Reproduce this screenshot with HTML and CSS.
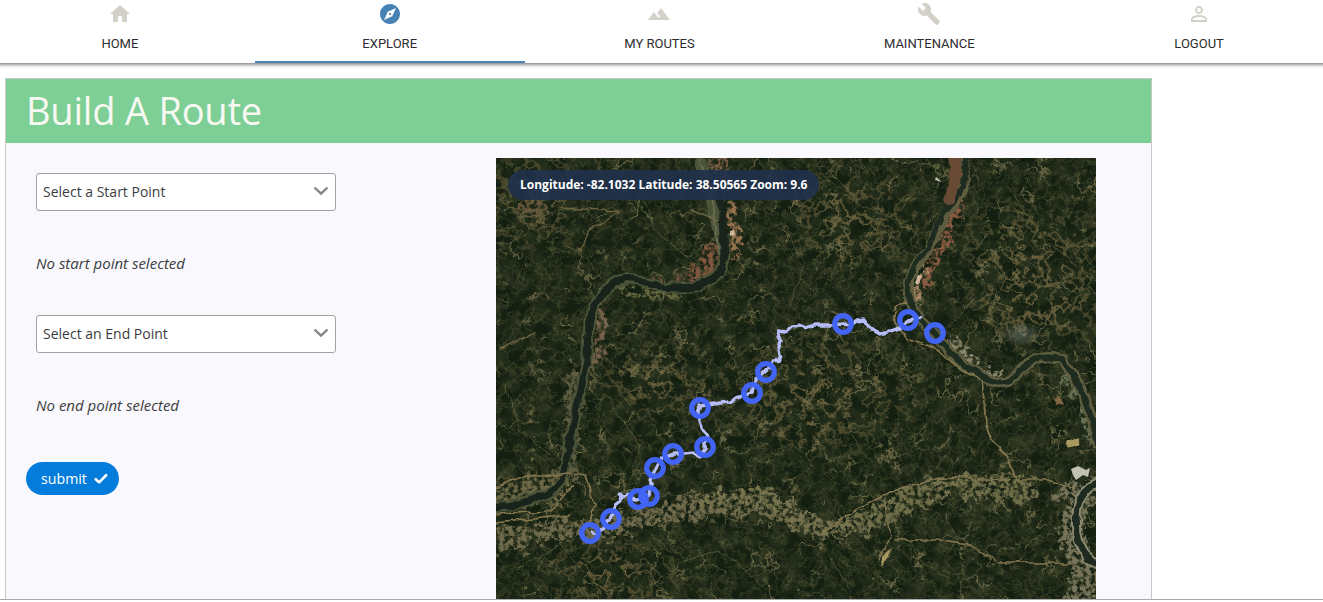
FILE: index.html
```html
<!DOCTYPE html>
<html lang="en">
<head>
<meta charset="utf-8">
<title>Build A Route</title>
<link rel="stylesheet" href="styles.css">
</head>
<body>
<nav class="tabs">
  <a class="tab"><svg class="tab-icon" viewBox="0 0 24 24"><path d="M10 20v-6h4v6h5v-8h3L12 3 2 12h3v8z"/></svg><span>HOME</span></a>
  <a class="tab active"><svg class="tab-icon" viewBox="0 0 24 24"><path d="M12 10.9c-.61 0-1.1.49-1.1 1.1s.49 1.1 1.1 1.1c.61 0 1.1-.49 1.1-1.1s-.49-1.1-1.1-1.1zM12 2C6.48 2 2 6.48 2 12s4.48 10 10 10 10-4.48 10-10S17.52 2 12 2zm2.19 12.19L6 18l3.81-8.19L18 6l-3.81 8.19z"/></svg><span>EXPLORE</span></a>
  <a class="tab"><svg class="tab-icon" viewBox="0 0 24 24"><path d="M14 6l-3.75 5 2.85 3.8-1.6 1.2C9.81 13.75 7 10 7 10l-6 8h22L14 6z"/></svg><span>MY ROUTES</span></a>
  <a class="tab"><svg class="tab-icon" viewBox="0 0 24 24"><path d="M22.7 19l-9.1-9.1c.9-2.3.4-5-1.5-6.9-2-2-5-2.4-7.4-1.3L9 6 6 9 1.6 4.7C.4 7.1.9 10.1 2.9 12.1c1.9 1.9 4.6 2.4 6.9 1.5l9.1 9.1c.4.4 1 .4 1.4 0l2.3-2.3c.5-.4.5-1.1.1-1.4z"/></svg><span>MAINTENANCE</span></a>
  <a class="tab"><svg class="tab-icon" viewBox="0 0 24 24"><path d="M12 5.9c1.16 0 2.1.94 2.1 2.1s-.94 2.1-2.1 2.1S9.9 9.16 9.9 8s.94-2.1 2.1-2.1m0 9c2.97 0 6.1 1.46 6.1 2.1v1.1H5.9V17c0-.64 3.13-2.1 6.1-2.1M12 4C9.79 4 8 5.79 8 8s1.79 4 4 4 4-1.79 4-4-1.79-4-4-4zm0 9c-2.67 0-8 1.34-8 4v3h16v-3c0-2.66-5.33-4-8-4z"/></svg><span>LOGOUT</span></a>
</nav>
<main class="panel">
  <h1 class="panel-title">Build A Route</h1>
  <div class="panel-body">
    <form class="route-form">
      <div class="select"><span>Select a Start Point</span><svg class="chevron" viewBox="0 0 16 10"><path d="M1.5 1.5l6.5 6.2 6.5-6.2"/></svg></div>
      <p class="hint">No start point selected</p>
      <div class="select"><span>Select an End Point</span><svg class="chevron" viewBox="0 0 16 10"><path d="M1.5 1.5l6.5 6.2 6.5-6.2"/></svg></div>
      <p class="hint">No end point selected</p>
      <button class="submit" type="button">submit <svg class="check" viewBox="0 0 14 12"><path d="M1.8 6.2l3.3 3.2 7-7.2"/></svg></button>
    </form>
    <div class="map">
      <svg class="map-canvas" viewBox="496 158 600 441">
        <defs>
          <filter id="veins" x="0" y="0" width="1" height="1" color-interpolation-filters="sRGB">
            <feTurbulence type="fractalNoise" baseFrequency=".04" numOctaves="5" seed="8" result="n"/>
            <feColorMatrix in="n" values="0 0 0 0 .48  0 0 0 0 .46  0 0 0 0 .31  1 0 0 0 0"/>
            <feComponentTransfer result="v"><feFuncA type="table" tableValues="0 0 0 0 0 0 0 0 0 0 0 0 0 0 0 1 0 0 0 0 0 0 0 0 0 0 0 0 0 0 0"/></feComponentTransfer>
            <feColorMatrix in="n" values="0 0 0 0 0  0 0 0 0 0  0 0 0 0 0  0 6 0 0 -2.7" result="m"/>
            <feComposite in="v" in2="m" operator="in"/>
            <feGaussianBlur stdDeviation=".45"/>
          </filter>
          <filter id="streams" x="0" y="0" width="1" height="1" color-interpolation-filters="sRGB">
            <feTurbulence type="fractalNoise" baseFrequency=".06" numOctaves="5" seed="31"/>
            <feColorMatrix values="0 0 0 0 .34  0 0 0 0 .38  0 0 0 0 .23  0 1 0 0 0"/>
            <feComponentTransfer><feFuncA type="table" tableValues="0 0 0 0 0 0 0 0 0 0 0 0 0 0 0 1 0 0 0 0 0 0 0 0 0 0 0 0 0 0 0"/></feComponentTransfer>
            <feGaussianBlur stdDeviation=".5"/>
          </filter>
          <filter id="clearings" x="0" y="0" width="1" height="1" color-interpolation-filters="sRGB">
            <feTurbulence type="fractalNoise" baseFrequency=".08" numOctaves="5" seed="21" result="n"/>
            <feColorMatrix in="n" values="0 0 0 0 .52  0 0 0 0 .46  0 0 0 0 .3  1 0 0 0 0"/>
            <feComponentTransfer><feFuncA type="table" tableValues="0 0 0 0 0 0 0 0 0 0 0 .2 1 .9 .3 0 0 0 0 0 0 0"/></feComponentTransfer>
            <feGaussianBlur stdDeviation=".4"/>
          </filter>
          <filter id="shade" x="0" y="0" width="1" height="1" color-interpolation-filters="sRGB">
            <feTurbulence type="fractalNoise" baseFrequency=".06" numOctaves="5" seed="4"/>
            <feColorMatrix values="0 0 0 0 .075  0 0 0 0 .12  0 0 0 0 .065  3 0 0 0 -.95"/>
            <feGaussianBlur stdDeviation=".6"/>
          </filter>
          <filter id="town" filterUnits="userSpaceOnUse" x="496" y="158" width="600" height="441" color-interpolation-filters="sRGB">
            <feTurbulence type="fractalNoise" baseFrequency=".22" numOctaves="4" seed="3" result="n"/>
            <feTurbulence type="fractalNoise" baseFrequency=".08" numOctaves="4" seed="12" result="w"/>
            <feColorMatrix in="n" values="0 0 0 0 0  0 0 0 0 0  0 0 0 0 0  4.5 0 0 0 -1.65" result="m"/>
            <feDisplacementMap in="SourceGraphic" in2="w" scale="24" xChannelSelector="R" yChannelSelector="G" result="d"/>
            <feComposite in="d" in2="m" operator="in"/>
            <feGaussianBlur stdDeviation=".45"/>
          </filter>
          <filter id="bend" filterUnits="userSpaceOnUse" x="496" y="158" width="600" height="441" color-interpolation-filters="sRGB">
            <feTurbulence type="fractalNoise" baseFrequency=".07" numOctaves="3" seed="9" result="n"/>
            <feDisplacementMap in="SourceGraphic" in2="n" scale="7" xChannelSelector="R" yChannelSelector="G"/>
            <feGaussianBlur stdDeviation=".5"/>
          </filter>
          <filter id="jitter" filterUnits="userSpaceOnUse" x="496" y="158" width="600" height="441" color-interpolation-filters="sRGB">
            <feTurbulence type="fractalNoise" baseFrequency=".15" numOctaves="1" seed="5" result="n"/>
            <feDisplacementMap in="SourceGraphic" in2="n" scale="5" xChannelSelector="R" yChannelSelector="G"/>
          </filter>
          <radialGradient id="fade"><stop offset="0" stop-color="#fff"/><stop offset="1" stop-color="#fff" stop-opacity="0"/></radialGradient>
          <mask id="patches" maskUnits="userSpaceOnUse" x="496" y="158" width="600" height="441">
            <rect x="496" y="158" width="600" height="441" fill="#3c3c3c"/>
            <g fill="url(#fade)">
              <ellipse cx="850" cy="220" rx="85" ry="65"/><ellipse cx="815" cy="395" rx="120" ry="75"/>
              <ellipse cx="1030" cy="260" rx="90" ry="75"/><ellipse cx="1040" cy="310" rx="85" ry="45"/>
              <ellipse cx="535" cy="200" rx="60" ry="60"/><ellipse cx="655" cy="380" rx="70" ry="45"/>
              <ellipse cx="610" cy="575" rx="80" ry="45"/>
            </g>
          </mask>
        </defs>
        <rect x="496" y="158" width="600" height="441" fill="#242e1b"/>
        <rect x="496" y="158" width="600" height="441" filter="url(#shade)"/>
        <rect x="496" y="158" width="600" height="441" filter="url(#streams)" opacity=".4"/>
        <rect x="496" y="158" width="600" height="441" filter="url(#veins)" opacity=".85"/>
        <g mask="url(#patches)"><rect x="496" y="158" width="600" height="441" filter="url(#clearings)" opacity=".8"/></g>

        <g filter="url(#town)" fill="none" stroke-linejoin="round">
          <path d="M496 541L560 529 600 531 650 516 700 506 755 505 795 516 830 535" stroke="#706b4c" stroke-width="20"/>
          <path d="M700 501L770 496 805 525 845 528 890 506 930 487 970 485 1035 488" stroke="#77734f" stroke-width="16"/>
          <path d="M860 526L900 503 940 485M955 485L1030 490" stroke="#706f4a" stroke-width="26"/>
          <path d="M1060 486L1080 500 1070 535 1080 565 1096 585M1068 590L1096 599" stroke="#77745a" stroke-width="25"/>
          <path d="M496 495L530 481 570 478 565 490 530 499 496 503z" fill="#6d6947" stroke="#6d6947" stroke-width="10"/>
          <path d="M575 365L575 410 568 460 574 478" stroke="#5f5d42" stroke-width="16"/>
          <path d="M602 300L598 340 592 370" stroke="#75624a" stroke-width="12"/>
          <path d="M600 292L612 285 635 293 680 294" stroke="#63683f" stroke-width="7"/>
          <path d="M690 280L708 269 720 251" stroke="#83573f" stroke-width="20"/>
          <path d="M655 282L682 281" stroke="#6e5140" stroke-width="6"/>
          <path d="M720 158L728 190" stroke="#86624a" stroke-width="14"/>
          <path d="M730 205L738 235 736 260" stroke="#96714e" stroke-width="9"/>
          <path d="M922 288L935 261 950 225 960 198" stroke="#8a5b40" stroke-width="13"/>
          <path d="M913 304L917 282 929 265" stroke="#ad8767" stroke-width="9"/>
          <path d="M945 340L978 366 1002 378" stroke="#8a876a" stroke-width="12"/>
          <path d="M1068 373L1085 400 1093 440" stroke="#697154" stroke-width="15"/>
          <ellipse cx="532" cy="208" rx="18" ry="11" fill="#66563b"/>
        </g>
        <g filter="url(#bend)" fill="none" stroke-linecap="round" stroke-linejoin="round">
          <path d="M700 158L710 200 720 235 725 255Q722 281 695 286Q670 292 642 281Q615 272 600 297Q587 308 587 360L571 437 562 481Q548 501 494 508" stroke="#4b5338" stroke-width="11"/>
          <path d="M721 190L724 235 725 255Q722 281 695 286Q670 292 642 281Q615 272 600 297Q587 308 587 360L571 437 562 481Q548 501 494 508" stroke="#17231b" stroke-width="7"/>
          <path d="M700 158L712 202 720 255" stroke="#6c7257" stroke-width="1.5"/>
          <path d="M964 158L964 190 945 215 928 250Q907 276 908 292Q913 316 938 337Q955 362 984 377Q1008 389 1022 369Q1040 350 1062 360Q1080 382 1091 416L1098 445" stroke="#5e5d40" stroke-width="11"/>
          <path d="M966 158L964 188 943 213 929 246Q905 276 908 292Q913 316 938 337Q955 362 984 377Q1008 389 1022 369Q1040 350 1062 360Q1080 382 1091 416L1098 445" stroke="#1e2c20" stroke-width="6"/>
          <path d="M956 157L955 180 949 198" stroke="#694a35" stroke-width="12"/>
          <path d="M1099 483Q1074 493 1077 523Q1076 552 1099 567" stroke="#8c8a70" stroke-width="10"/>
          <path d="M1099 483Q1074 493 1077 523Q1076 552 1099 567" stroke="#1e2a20" stroke-width="6"/>
          <g stroke="#84764f" stroke-width="1.7">
            <path d="M894 305L908 303M894 305L896 325 907 338 934 348 962 370 982 380 986 425 991 441 1008 456 1016 480M1016 480L1050 480 1074 489"/>
            <path d="M496 488L520 478 570 473 585 475 595 505 591 525"/>
            <path d="M496 523L570 515M496 514L552 511 573 485M820 535L860 507 900 489 939 477 1010 480"/>
            <path d="M885 505L890 538 878 561M895 540L942 540 968 544 1000 563 1070 563" stroke-width="1.4"/>
            <path d="M560 208L620 211M620 211L590 230 580 252M690 210L719 221M500 348L535 333" opacity=".7"/>
          </g>
          <g stroke="#73704a" opacity=".55">
            <path d="M500 245Q530 240 535 215L575 208M640 190L655 230 690 260M565 243L590 262 600 280M505 383L520 430 550 455M615 410L640 445 630 480"/>
            <path d="M780 220L805 265 790 305M830 170L860 205 895 220M1010 190L1045 240 1096 280M1005 250L1035 265 1050 290M845 415L860 450 875 464"/>
            <path d="M650 535L685 560 720 550 750 575M820 540L850 590M910 540L920 560 950 580M515 570L560 545 600 590"/>
          </g>
          <path d="M882 557L892 548 888 557 881 565z" fill="#a89961"/>
          <path d="M1067 440L1077 438 1078 444 1069 447z" fill="#a89961" stroke="#a89961"/>
          <path d="M1053 399l7-4 5 8-8 3z" fill="#806644"/>
        </g>
        <path d="M1071 469l7-3 8 4 4-2-2 9-5-2-7 5-3-5zM936 177l6 5-7-2z" fill="#c2c2b4"/>
        <path d="M730 231l4-1 1 5-5 1zM918 275l4 1-4 9-3-2z" fill="#ccb79b"/>
        <ellipse cx="1021" cy="334" rx="22" ry="12" fill="url(#fade)" opacity=".25"/>

        <g filter="url(#jitter)" fill="none" stroke="#b7bdf7" stroke-width="3.3" stroke-linejoin="round">
          <path d="M590 532L596 534 604 528 608 520 614 513 616 505 621 501 619 494 623 498 628 494 630 499 637 500 648 496 652 488 650 480 655 470 658 464 662 458 673 454 684 454 694 453 700 457 705 450 705 443 709 437 704 432 700 422 698 412 700 406 714 404 729 402 740 397 752 393 754 384 759 377 765 372 772 366 773 361 780 360 778 350 781 341 777 336 779 331 785 332 792 327 800 325 804 328 815 325 829 325 843 324 851 325 857 321 864 320 869 327 875 331 880 334 888 332 899 328 908 321 917 317 921 318"/>
        </g>
        <g class="stops">
          <circle cx="590" cy="533" r="8.3"/><circle cx="611" cy="519" r="8.3"/><circle cx="638" cy="499" r="8.3"/><circle cx="649" cy="496" r="8.3"/>
          <circle cx="655" cy="468" r="8.3"/><circle cx="673" cy="454" r="8.3"/><circle cx="705" cy="447" r="8.3"/><circle cx="700" cy="408" r="8.3"/>
          <circle cx="752" cy="393" r="8.3"/><circle cx="766" cy="372" r="8.3"/><circle cx="843" cy="324" r="8.3"/><circle cx="908" cy="320" r="8.3"/><circle cx="935" cy="333" r="8.3"/>
        </g>
      </svg>
      <div class="position">Longitude: -82.1032 Latitude: 38.50565 Zoom: 9.6</div>
    </div>
  </div>
</main>
</body>
</html>
```

FILE: styles.css
```css
* { box-sizing: border-box; }
html { height: 100%; }
body {
  margin: 0;
  overflow: hidden;
  display: flex;
  flex-direction: column;
  background: #fff;
  height: 600px;
  border-bottom: 1px solid #aaa;
  font-family: "Open Sans", sans-serif;
  color: #3c3c40;
}
.tabs {
  display: flex;
  flex: none;
  width: 1349px;
  height: 63px;
  margin-left: -15px;
  background: #fff;
  box-shadow: 0 1px 3px 1px rgba(0, 0, 0, .45);
}
.tab {
  flex: 1;
  display: flex;
  flex-direction: column;
  align-items: center;
  gap: 10px;
  padding-top: 2px;
  border-bottom: 2px solid transparent;
  font: 400 13px/15px Roboto, sans-serif;
  color: #2c2c30;
}
.tab.active { border-bottom-color: #4682b4; }
.tab-icon { width: 24px; height: 24px; fill: #d3d0c7; }
.active .tab-icon { fill: #4682b4; }
.panel {
  flex: 1;
  display: flex;
  flex-direction: column;
  min-height: 0;
  width: 1147px;
  margin: 15px 0 0 5px;
  border: 1px solid #c8c8c8;
  border-bottom: 0;
  background: #f8f8fd;
}
.panel-title {
  flex: none;
  height: 64px;
  margin: 0;
  padding-left: 20px;
  background: #7ecf95;
  color: #f8f8f2;
  font-size: 38px;
  font-weight: 400;
  letter-spacing: -.2px;
  line-height: 63px;
}
.panel-body { flex: 1; display: flex; min-height: 0; }
.route-form { width: 490px; padding: 30px 0 0 30px; font-size: 14px; }
.select {
  display: flex;
  align-items: center;
  justify-content: space-between;
  width: 300px;
  height: 38px;
  padding: 0 6px 2px;
  border: 1px solid #a2a2a2;
  border-radius: 3px;
  background: #fff;
}
.chevron { width: 16px; height: 10px; fill: none; stroke: #858585; stroke-width: 2.4; }
.hint { margin: 42px 0; font-size: 15px; font-style: italic; line-height: 20px; }
.submit {
  display: flex;
  align-items: center;
  gap: 7px;
  width: 93px;
  height: 33px;
  margin: 47px 0 0 -10px;
  padding: 0 0 0 15px;
  border: 0;
  border-radius: 17px;
  background: #047cdc;
  color: #fff;
  font: 14.2px "Open Sans", sans-serif;
}
.check { width: 14px; height: 12px; fill: none; stroke: #fff; stroke-width: 2.7; stroke-linecap: round; stroke-linejoin: round; }
.map { position: relative; width: 600px; height: 441px; margin-top: 15px; overflow: hidden; }
.map-canvas { display: block; width: 600px; height: 441px; }
.stops circle { fill: none; stroke: #4264f4; stroke-width: 5.2; }
.position {
  position: absolute;
  top: 12px;
  left: 12px;
  height: 30px;
  padding: 0 12px;
  border-radius: 15px;
  background: rgba(31, 49, 76, .9);
  color: #fff;
  font-size: 12px;
  font-weight: 700;
  line-height: 30px;
  white-space: nowrap;
}
```
